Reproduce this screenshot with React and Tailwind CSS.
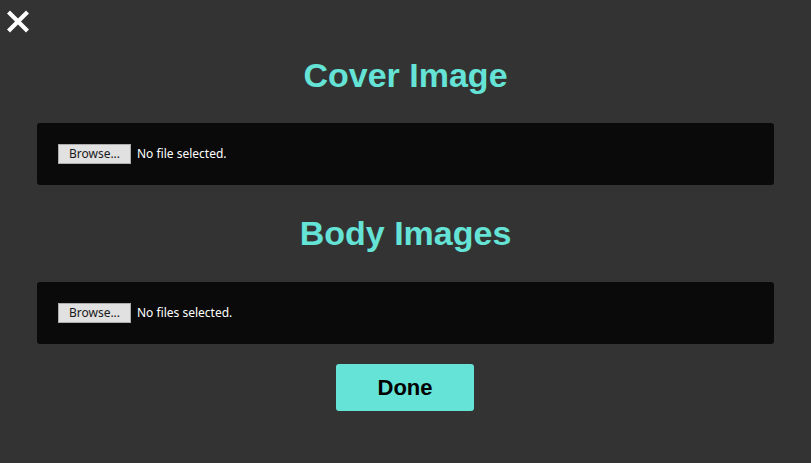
function FileRow({ label }) {
  return (
    <div className="mx-[37px] h-[62px] rounded-[3px] bg-[#0a0a0a] flex items-center pl-[21px]">
      <span className="h-[20px] w-[73px] flex items-center justify-center bg-[#e1e1e1] border border-[#adadad] text-[12px] text-[#1a1a1a] font-['Noto_Sans',sans-serif]">
        Browse...
      </span>
      <span className="ml-[6px] text-[12px] text-white font-['Noto_Sans',sans-serif]">{label}</span>
    </div>
  );
}

export default function App() {
  return (
    <div className="w-[811px] h-[463px] bg-[#333333] font-['Liberation_Sans',Arial,sans-serif] flex flex-col">
      <button className="absolute left-[7px] top-[10px] w-[22px] h-[23px]">
        <svg viewBox="0 0 22 23" className="w-[22px] h-[23px]">
          <path d="M3 3.5 L19 19.5 M19 3.5 L3 19.5" stroke="white" strokeWidth="4.2" strokeLinecap="square" fill="none" />
        </svg>
      </button>

      <h1 className="mt-[55px] h-[40px] leading-[40px] text-center text-[34px] font-bold text-[#64e3d6]">Cover Image</h1>
      <div className="mt-[28px]">
        <FileRow label="No file selected." />
      </div>

      <h2 className="mt-[28px] h-[40px] leading-[40px] text-center text-[34px] font-bold text-[#64e3d6]">Body Images</h2>
      <div className="mt-[29px]">
        <FileRow label="No files selected." />
      </div>

      <div className="mt-[20px] flex justify-center pr-px">
        <button className="w-[138px] h-[47px] rounded-[3px] bg-[#64e3d6] text-[22px] font-bold text-black">Done</button>
      </div>
    </div>
  );
}
